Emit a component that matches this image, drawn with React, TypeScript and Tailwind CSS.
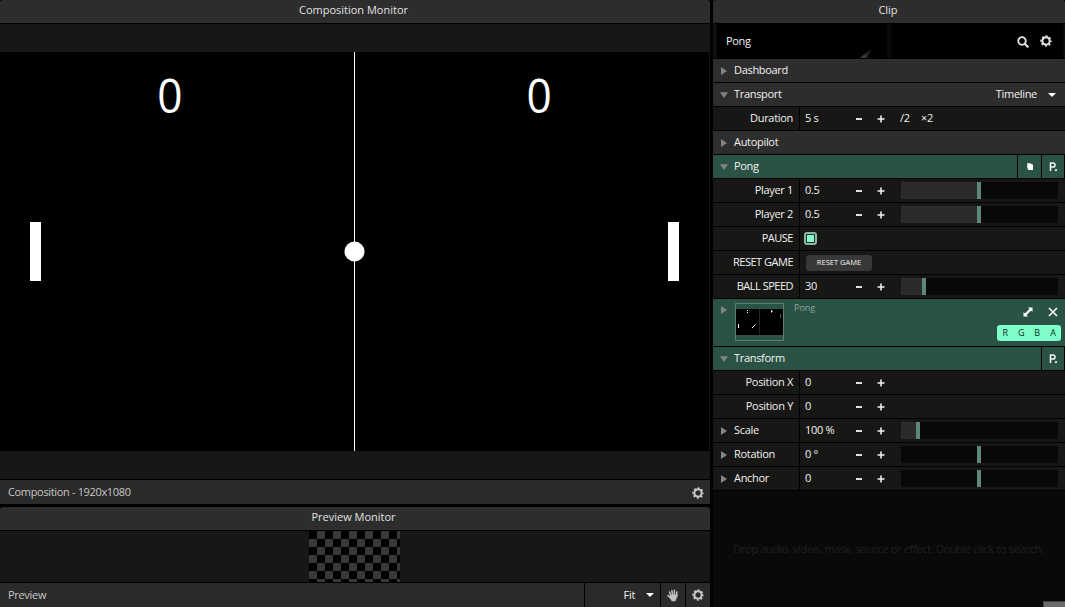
import type { ReactNode } from "react";

function Gear({ className = "" }: { className?: string }) {
  return (
    <svg viewBox="0 0 12 12" className={`h-[12px] w-[12px] shrink-0 ${className}`}>
      <circle cx="6" cy="6" r="3.7" fill="none" stroke="currentColor" strokeWidth="2.1" />
      <circle cx="6" cy="6" r="5" fill="none" stroke="currentColor" strokeWidth="1.5" strokeDasharray="1.96 1.96" strokeDashoffset="0.98" />
    </svg>
  );
}

function SearchIcon() {
  return (
    <svg viewBox="0 0 12 12" className="mt-px h-[12px] w-[12px] shrink-0 text-[#e4e4e4]" fill="none" stroke="currentColor">
      <circle cx="5" cy="5" r="3.8" strokeWidth="1.8" />
      <path d="M7.8 7.8 11.3 11.3" strokeWidth="2.2" />
    </svg>
  );
}

function Hand() {
  return (
    <svg viewBox="0 0 12 13" className="h-[13px] w-[12px] text-[#c4c4c4]" fill="none" stroke="currentColor" strokeLinecap="round">
      <path d="M4.1 7.5 2.6 3M5.6 7 4.9 1.4M7.2 7 7.5 1.2M8.6 7.5 10 3M3.9 9.3 1 6.6" strokeWidth="1.5" />
      <path d="M3.4 6.4h5.8l1.8-.8-1.8 4-1 2.4H4.8L3.2 9.2z" fill="currentColor" strokeWidth=".5" />
    </svg>
  );
}

function Triangle({ open }: { open?: boolean }) {
  return (
    <svg viewBox="0 0 8 8" className="h-2 w-2 shrink-0" fill="#848484">
      <path d={open ? "M0 1.2h8L4 7z" : "M1 0v8L7 4z"} />
    </svg>
  );
}

function Caret() {
  return (
    <svg viewBox="0 0 8 4" className="h-1 w-2 shrink-0" fill="#fff">
      <path d="M0 0h8L4 4z" />
    </svg>
  );
}

function PMark() {
  return (
    <svg viewBox="0 0 8 9" className="h-[9px] w-2" fill="none" stroke="#f0f4f2" strokeWidth="1.5">
      <path d="M1.5 9V.9h2.4a2.1 2.1 0 0 1 0 4.2H1.5" />
      <path d="M6 8.1h2" strokeWidth="1.8" />
    </svg>
  );
}

function Titlebar({ children }: { children: ReactNode }) {
  return (
    <div className="mb-px flex h-[23px] shrink-0 items-center justify-center rounded-t-[3px] bg-[#2d2d2d] pb-[4px] tracking-normal text-[#e2e2e2]">
      {children}
    </div>
  );
}

function Section({ title, open, green, children }: { title: string; open?: boolean; green?: boolean; children?: ReactNode }) {
  const tone = green ? "bg-[#2a5346]" : "bg-[#2d2d2d]";
  return (
    <div className="mb-px flex h-[23px] shrink-0">
      <div className={`flex grow items-center pl-[7px] ${tone}`}>
        <Triangle open={open} />
        <span className="ml-[6px] pb-[2px]">{title}</span>
        {!green && children}
      </div>
      {green && children}
    </div>
  );
}

function Slider({ fill, at }: { fill?: boolean; at: number }) {
  return (
    <div className="ml-auto mr-[7px] flex h-[17px] w-[157px] self-center bg-[#080808]">
      <div className={fill ? "bg-[#2b2b2b]" : ""} style={{ width: at }} />
      <div className="w-1 bg-[#5d8878]" />
    </div>
  );
}

function Param({ label, value, fold, caps, step = true, children }: { label: string; value?: string; fold?: boolean; caps?: boolean; step?: boolean; children?: ReactNode }) {
  return (
    <div className="mb-px flex h-[23px] shrink-0">
      <div className={`mr-px flex w-[86px] items-center bg-[#171715] ${fold ? "pl-[7px]" : "justify-end pr-[6px]"} ${caps ? "tracking-[-0.5px]" : ""}`}>
        {fold && <Triangle />}
        <span className={fold ? "ml-[6px] pb-[2px]" : "pb-[2px]"}>{label}</span>
      </div>
      <div className="flex grow items-center bg-[#171715] pl-[5px]">
        {step && (
          <>
            <span className="w-[51px] pb-[2px]">{value}</span>
            <span className="h-[2px] w-[6px] bg-[#ddd]" />
            <svg viewBox="0 0 8 8" className="ml-[15px] h-2 w-2" stroke="#eee" strokeWidth="1.6">
              <path d="M4 .5v7M.5 4h7" />
            </svg>
          </>
        )}
        {children}
      </div>
    </div>
  );
}

export default function App() {
  return (
    <div className="flex h-[607px] w-[1065px] overflow-hidden bg-black font-['Open_Sans','Noto_Sans',sans-serif] text-[11px] leading-[15px] tracking-[-0.31px] whitespace-nowrap text-[#f2f2f2]">
      <div className="mr-[3px] flex w-[710px] shrink-0 flex-col">
        <Titlebar><span className="-ml-[3px]">Composition Monitor</span></Titlebar>
        <div className="h-[455px] bg-[#171715] pt-[28px] pr-px">
          <svg viewBox="0 0 709 399" className="h-[399px] w-[709px] bg-black" fill="#fff">
            <path d="M354 0h1v399h-1zM30 170h11v59H30zM668 170h11v59h-11z" />
            <circle cx="354.5" cy="199.5" r="10" />
            <text transform="translate(169.8 61) scale(.94 1)" fontSize="47" textAnchor="middle">0</text>
            <text transform="translate(539 61) scale(.94 1)" fontSize="47" textAnchor="middle">0</text>
          </svg>
        </div>
        <div className="mt-px flex h-[24px] items-center justify-between bg-[#2a2a2a] pl-2 pr-[6px] text-[#c8c8c8]">
          <span className="pb-px tracking-[-0.34px]">Composition - 1920x1080</span>
          <Gear className="mt-px" />
        </div>
        <div className="h-[3px]" />
        <Titlebar><span className="-ml-[3px]">Preview Monitor</span></Titlebar>
        <div className="flex h-[51px] bg-[#171715] pl-[309px]">
          <div className="w-[91px] bg-[#0a0a0a] bg-[conic-gradient(#000_25%,#383838_0_50%,#000_0_75%,#383838_0)] bg-[size:16px_16px] bg-[position:0_8px]" />
        </div>
        <div className="mt-px flex h-[24px] gap-px text-[#c8c8c8]">
          <div className="flex grow items-center bg-[#2a2a2a] pb-px pl-2">Preview</div>
          <div className="flex w-[75px] items-center justify-end bg-[#2a2a2a] pr-[6px] text-[#f2f2f2]">
            <span className="mr-[11px] pb-px">Fit</span>
            <Caret />
          </div>
          <div className="flex w-[24px] items-center justify-center bg-[#2a2a2a]"><Hand /></div>
          <div className="flex w-[24px] items-center justify-center bg-[#2a2a2a]"><Gear /></div>
        </div>
      </div>

      <div className="flex w-[352px] shrink-0 flex-col">
        <Titlebar><span className="-ml-[2px]">Clip</span></Titlebar>
        <div className="mb-px flex h-[34px] shrink-0 items-center bg-[linear-gradient(90deg,#111_0_3px,#000_4px_173px,#0b0b0b_175px_177px,#000_179px_350px,#111_351px)] pl-[13px] pr-[13px]">
          <span className="w-[26px] pb-px">Pong</span>
          <svg viewBox="0 0 16 10" className="mt-auto ml-[107px] h-[10px] w-4">
            <defs>
              <linearGradient id="streak" x1="0" y1="1" x2="1" y2="0">
                <stop offset=".2" stopColor="#383838" />
                <stop offset="1" stopColor="#000" />
              </linearGradient>
            </defs>
            <path d="M1 10C5 6 9 2.5 14 0 12 3.5 10 7 7.500 10z" fill="url(#streak)" />
          </svg>
          <div className="ml-auto flex gap-[11px] text-[#e4e4e4]"><SearchIcon /><Gear /></div>
        </div>
        <Section title="Dashboard" />
        <Section title="Transport" open>
          <span className="mr-[11px] ml-auto pb-[2px]">Timeline</span>
          <span className="mr-[9px]"><Caret /></span>
        </Section>
        <Param label="Duration" value="5 s">
          <span className="ml-[15px] w-[21px] pb-[2px]">/2</span>
          <span className="pb-[2px]">×2</span>
        </Param>
        <Section title="Autopilot" />
        <Section title="Pong" open green>
          <div className="ml-px flex w-[23px] items-center justify-center bg-[#2a5346]">
            <svg viewBox="0 0 8 8" className="mt-px h-2 w-2"><path d="M1 0h4v1H3v5H2L1 5z" fill="#c9d4d0" /><path d="M2 1h4l1 1v5H2z" fill="#fff" /></svg>
          </div>
          <div className="mr-px ml-px flex w-[22px] items-center justify-center bg-[#2a5346]"><PMark /></div>
        </Section>
        <Param label="Player 1" value="0.5"><Slider fill at={76} /></Param>
        <Param label="Player 2" value="0.5"><Slider fill at={76} /></Param>
        <Param label="PAUSE" caps step={false}>
          <div className="-ml-px mb-px flex h-[13px] w-[13px] items-center justify-center rounded-[3px] border-2 border-[#8fb5a5] bg-[#1d302a]">
            <div className="h-[7px] w-[7px] bg-[#7effcb]" />
          </div>
        </Param>
        <Param label="RESET GAME" caps step={false}>
          <div className="ml-px flex h-4 w-[66px] items-center justify-center rounded-[3px] bg-[#383838] text-[7.5px] tracking-normal">RESET GAME</div>
        </Param>
        <Param label="BALL SPEED" caps value="30"><Slider fill at={21} /></Param>
        <div className="mb-px flex h-[47px] shrink-0 bg-[#2a5346] pl-[7px]">
          <div className="pt-[7px]"><Triangle /></div>
          <svg viewBox="0 0 49 38" className="mt-[4px] ml-[7px] h-[38px] w-[49px]">
            <path d="M.5.5h48v37H.5z" fill="none" stroke="#627d73" />
            <path d="M1 6h47v26H1z" fill="#000" />
            <path d="M24 6h1v26h-1z" fill="#242424" />
            <path d="M12 7h1v1h-1zM12 9h1v1h-1zM3 21h1v4H3zM36 7l2 1-2 2z" fill="#fff" />
            <path d="m17 25 3.5-3.5" stroke="#fff" />
            <path d="M45 11h1v4h-1z" fill="#555" />
          </svg>
          <span className="ml-[10px] pt-[2px] text-[9px] leading-[14px] tracking-normal text-[#8fa39b]">Pong</span>
          <div className="ml-auto flex flex-col items-end pr-1 pt-2">
            <div className="mr-[3px] flex h-[10px] gap-[15px]">
              <svg viewBox="0 0 10 10" className="h-[10px] w-[10px]" fill="#fff"><path d="M5 .5h4.5V5L8 3.6 3.6 8 5 9.5H.5V5L2 6.4 6.4 2z" /></svg>
              <svg viewBox="0 0 10 10" className="h-[10px] w-[10px]" stroke="#fff" strokeWidth="1.5"><path d="m1 1 8 8M9 1 1 9" /></svg>
            </div>
            <div className="mt-2 grid h-4 w-16 grid-cols-4 items-center rounded-[3px] bg-[#7effcb] text-center text-[9px] leading-4 text-[#0c2c20]">
              <span>R</span><span>G</span><span>B</span><span>A</span>
            </div>
          </div>
        </div>
        <Section title="Transform" open green>
          <div className="mr-px ml-px flex w-[22px] items-center justify-center bg-[#2a5346]"><PMark /></div>
        </Section>
        <Param label="Position X" value="0" />
        <Param label="Position Y" value="0" />
        <Param label="Scale" value="100 %" fold><Slider fill at={15} /></Param>
        <Param label="Rotation" value="0 °" fold><Slider at={76} /></Param>
        <Param label="Anchor" value="0" fold><Slider at={76} /></Param>
        <div className="flex grow flex-col items-center bg-[#090909] pt-[50px] text-[#202020]">
          <span className="-ml-px">Drop audio, video, mask, source or effect. Double click to search.</span>
          <div className="mt-auto h-[6px] w-[22px] self-end border-t border-l border-[#444] bg-[#6a6a6a]" />
        </div>
      </div>
    </div>
  );
}
